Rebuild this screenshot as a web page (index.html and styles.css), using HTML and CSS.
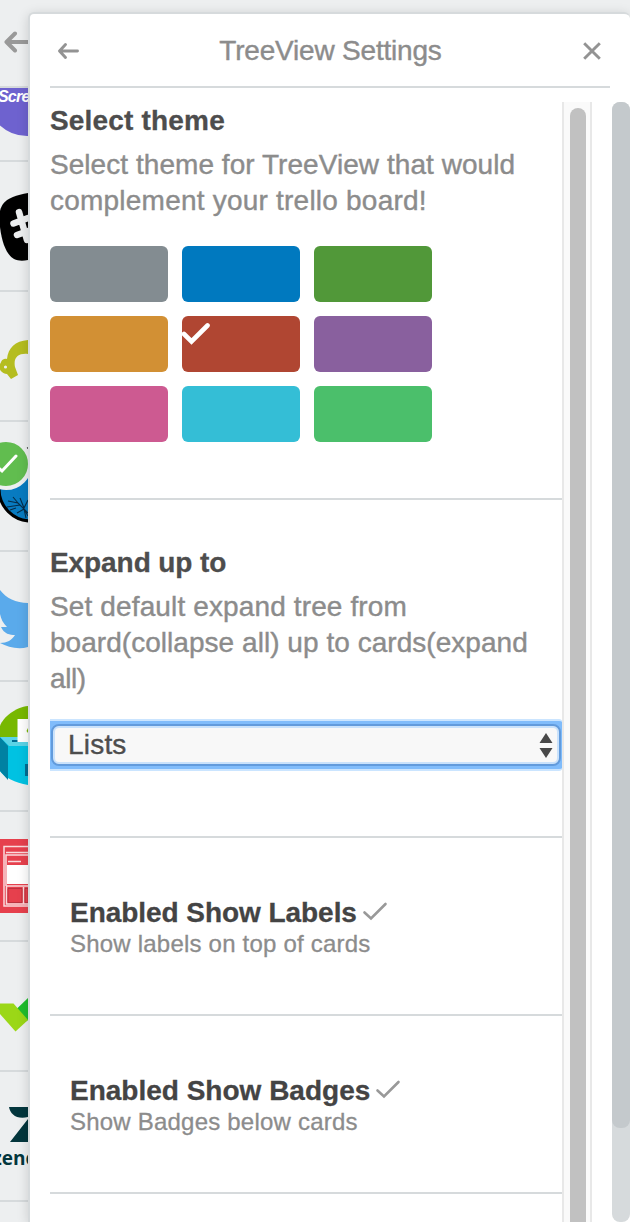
FILE: index.html
```html
<!DOCTYPE html>
<html lang="en">
<head>
<meta charset="utf-8">
<title>TreeView Settings</title>
<link rel="stylesheet" href="styles.css">
</head>
<body>
<div class="app">
  <aside class="rail">
    <header class="rail-head">
      <svg width="28" height="86" viewBox="0 0 28 86"><path d="M28 42H6.500M15 33.500L6.500 42L15 50.500" fill="none" stroke="#999" stroke-width="4" stroke-linecap="round" stroke-linejoin="round"/></svg>
    </header>
    <div class="rail-item rail-first">
      <svg viewBox="0 0 28 128"><circle cx="27" cy="64" r="40" fill="#6e62cf"/><text x="-2" y="70" class="script-word">Scre</text></svg>
    </div>
    <div class="rail-item">
      <svg viewBox="0 0 28 128"><path d="M28 31C17 33 7 36 3 42C-1 48 -1 53 0 65C2 82 7 93 14 97C18 99 23 99 28 98Z" fill="#000"/><path d="M19 50L27 78M28 56L13.500 61.500M28 69L17 73" fill="none" stroke="#edeff0" stroke-width="6.500" stroke-linecap="round"/></svg>
    </div>
    <div class="rail-item">
      <svg viewBox="0 0 28 128"><path d="M28 48C15 49 8 56 7 67C-1 64 -3 82 7 82L11 87L18 83L15 75C13 65 19 61 28 62Z" fill="#b5bd20"/><circle cx="5.500" cy="75" r="3.800" fill="#edeff0" stroke="#b5bd20" stroke-width="4.500"/></svg>
    </div>
    <div class="rail-item">
      <svg viewBox="0 0 28 128"><circle cx="31" cy="67" r="32" fill="#087bc1" stroke="#000" stroke-width="3"/><path d="M28 25L26.500 26L28 27Z" fill="#222"/><path d="M8 79L18 81L28 91M13 75L18 81M7 85L20 83M17 91L24 87L28 94M20 76L24 86M28 78L24 86M10 88L16 86M26 96L24 87" fill="none" stroke="#062d49" stroke-width="1.100"/><circle cx="6" cy="42" r="24" fill="#61bd4f" stroke="#edeff0" stroke-width="4"/><path d="M-5 43L2 49L16 34" fill="none" stroke="#fff" stroke-width="3" stroke-linecap="round"/></svg>
    </div>
    <div class="rail-item">
      <svg viewBox="0 0 28 128"><path d="M0 38C6 46 16 51 28 51V95C18 98 8 95 0 91C7 91 12 88 15 83C10 83 4 82 1 75H7C3 71 1 67 0 62Z" fill="#5aaaeb"/></svg>
    </div>
    <div class="rail-item">
      <svg viewBox="0 0 28 128"><path d="M28 24C16 25 3 35 0 44V55H28Z" fill="#77b800"/><path d="M0 55H28V103C15 101 4 95 0 89Z" fill="#00c2e2"/><path d="M0 55L8 64V98L0 89Z" fill="#0081a2"/><path d="M0 55H28V64H9Z" fill="#5bd3e6"/><path d="M12 58H18V60H12Z" fill="#006c92"/><path d="M17.500 37H28V60H17.500Z" fill="#fff"/><path d="M28 46L26.500 49L28 51Z" fill="#77b800"/><path d="M25 82H28V94H25Z" fill="#006c92"/></svg>
    </div>
    <div class="rail-item">
      <svg viewBox="0 0 28 128"><path d="M0 27H28V101H0Z" fill="#e6404d"/><path d="M28 34.500H4V94H28M28 40.500H6M28 43H6V74M28 92H6.500V74H28M23.500 75V92M8 49.500H21" fill="none" stroke="#fadadd" stroke-width="1.500"/><path d="M7 53H28V72H7Z" fill="#fff"/><path d="M8 76.500H22V90.500H8ZM25 76.500H28V90.500H25Z" fill="#e6404d" stroke="#a92d3a" stroke-width=".7"/></svg>
    </div>
    <div class="rail-item">
      <svg viewBox="0 0 28 128"><path d="M16 67.500L28 56V78L22 82Z" fill="#1fbd2d"/><path d="M0 61.500H13.500L28 78L15.500 89.500L0 72Z" fill="#9bd717"/></svg>
    </div>
    <div class="rail-item">
      <svg viewBox="0 0 28 128"><path d="M9 35H28V45C17 48 10 42 9 35ZM28 47V70H10Z" fill="#03363d"/><text x="-7.500" y="93" class="brand-word">zend</text></svg>
    </div>
    <div class="rail-item"></div>
  </aside>

  <section class="panel">
    <header class="panel-head">
      <svg class="back" width="22" height="20" viewBox="0 0 22 20"><path d="M20.500 10H3M8.500 3.500L2.500 10L8.500 16.500" fill="none" stroke="#939393" stroke-width="2.900" stroke-linecap="round" stroke-linejoin="round"/></svg>
      <h1 class="title">TreeView Settings</h1>
      <svg class="close" width="20" height="20" viewBox="0 0 20 20"><path d="M2.200 2.200L17.800 17.800M17.800 2.200L2.200 17.800" fill="none" stroke="#939393" stroke-width="2.900"/></svg>
    </header>
    <div class="panel-body">
      <main class="settings">
        <section class="group theme-group">
          <h2 class="heading h-theme">Select theme</h2>
          <p class="text"><span class="t1">Select theme for TreeView that would</span><br><span class="t2">complement your trello board!</span></p>
          <div class="swatches">
            <div class="swatch grey"></div><div class="swatch blue"></div><div class="swatch green"></div>
            <div class="swatch orange"></div>
            <div class="swatch red"><svg width="30" height="30" viewBox="0 0 30 30"><path d="M2 18L9.500 25.500L25.500 9.500" fill="none" stroke="#fff" stroke-width="4.600" stroke-linecap="round" stroke-linejoin="miter"/></svg></div>
            <div class="swatch purple"></div>
            <div class="swatch pink"></div><div class="swatch sky"></div><div class="swatch lime"></div>
          </div>
        </section>
        <section class="group expand-group">
          <h2 class="heading h-expand">Expand up to</h2>
          <p class="text"><span class="t3">Set default expand tree from</span><br><span class="t4">board(collapse all) up to cards(expand</span><br><span class="t5">all)</span></p>
          <div class="focus-ring">
            <div class="select" tabindex="0">
              <span class="select-value">Lists</span>
              <svg width="14" height="28" viewBox="0 0 14 28"><path d="M.5 12L7 2L13.500 12ZM.5 17H13.500L7 27Z" fill="#484848"/></svg>
            </div>
          </div>
        </section>
        <section class="group toggle">
          <div class="toggle-line"><h2 class="heading h-labels">Enabled Show Labels</h2><svg class="tick" width="26" height="22" viewBox="0 0 26 22"><path d="M2.500 11.500L9 17.500L23.500 3" fill="none" stroke="#999" stroke-width="2.600" stroke-linecap="round"/></svg></div>
          <p class="hint">Show labels on top of cards</p>
        </section>
        <section class="group toggle">
          <div class="toggle-line"><h2 class="heading">Enabled Show Badges</h2><svg class="tick" width="26" height="22" viewBox="0 0 26 22"><path d="M2.500 11.500L9 17.500L23.500 3" fill="none" stroke="#999" stroke-width="2.600" stroke-linecap="round"/></svg></div>
          <p class="hint">Show Badges below cards</p>
        </section>
      </main>
      <div class="inner-track"><div class="inner-thumb"></div></div>
      <div class="outer-track"><div class="outer-thumb"></div></div>
    </div>
  </section>
</div>
</body>
</html>
```

FILE: styles.css
```css
* { box-sizing: border-box; }
body { margin: 0; font-family: "Liberation Sans", Arial, sans-serif; background: #edeff0; }
h1, h2, p { margin: 0; }
svg { display: block; flex: none; }

.app { display: flex; width: 630px; height: 1222px; overflow: hidden; }

.rail { width: 28px; flex: none; overflow: hidden; }
.rail-head { height: 88px; border-bottom: 2px solid #d6dadc; }
.rail-item { height: 130px; border-bottom: 2px solid #d6dadc; }
.rail-item svg { width: 28px; height: 128px; }
.rail-first { display: flex; align-items: flex-end; height: 74px; overflow: hidden; }
.script-word { font: italic bold 16px "Liberation Sans", sans-serif; letter-spacing: -.8px; fill: #fff; }
.brand-word { font: bold 19px "Open Sans", sans-serif; fill: #03363d; }

.panel {
  flex: 1;
  min-width: 0;
  margin-top: 12px;
  display: flex;
  flex-direction: column;
  background: #fff;
  border: 2px solid #d6dadc;
  border-right: 0;
  border-bottom: 0;
  border-radius: 6px 6px 0 0;
  box-shadow: 0 2px 12px rgba(0, 0, 0, .15);
}
.panel-head {
  flex: none;
  display: flex;
  align-items: center;
  justify-content: space-between;
  height: 74px;
  margin: 0 20px;
  padding: 2px 8px 0 7px;
  border-bottom: 2px solid #d6dadc;
}
.title { font-size: 28px; line-height: 36px; font-weight: 400; color: #8c8c8c; letter-spacing: -.2px; -webkit-text-stroke: .4px; }

.panel-body { flex: 1; min-height: 0; display: flex; padding: 14px 0 0 20px; }
.settings { width: 512px; overflow: hidden; }
.group { border-bottom: 2px solid #d6dadc; }
.theme-group { padding-bottom: 56px; }
.heading { padding-top: 1px; font-size: 28px; line-height: 36px; font-weight: 700; color: #4d4d4d; white-space: nowrap; -webkit-text-stroke: .3px; }
.text { margin-top: 8px; font-size: 28px; line-height: 36px; color: #8c8c8c; white-space: nowrap; -webkit-text-stroke: .4px; }
.h-theme { letter-spacing: .18px; }
.h-expand { letter-spacing: -.08px; }
.h-labels { letter-spacing: -.05px; }
.t1 { letter-spacing: .05px; }
.t2 { letter-spacing: .22px; }
.t3 { letter-spacing: .13px; }
.t4 { letter-spacing: .04px; }
.t5 { letter-spacing: -.4px; }

.swatches { display: grid; grid-template-columns: repeat(3, 118px); grid-auto-rows: 56px; gap: 14px; margin-top: 27px; }
.swatch { border-radius: 6px; overflow: hidden; }
.grey { background: #838c91; }
.blue { background: #0079bf; }
.green { background: #519839; }
.orange { background: #d29034; }
.red { background: #b04632; }
.purple { background: #89609e; }
.pink { background: #cd5a91; }
.sky { background: #34bed6; }
.lime { background: #4bbf6b; }

.expand-group { padding: 44px 0 65px; }
.focus-ring {
  height: 52px;
  margin-top: 22px;
  padding: 3px 1px;
  background: #80bcfb;
  border: solid #cbe5ff;
  border-width: 2px 0;
  border-radius: 0 3px 3px 0;
}
.select {
  display: flex;
  align-items: center;
  justify-content: space-between;
  height: 42px;
  padding: 0 6px 0 15px;
  background: #f8f8f8;
  border: 2px solid #629bdc;
  border-radius: 8px;
  box-shadow: inset 0 0 0 2px #cae2fb;
}
.select-value { font-size: 28px; line-height: 36px; color: #4d4d4d; letter-spacing: .2px; -webkit-text-stroke: .4px; }

.toggle { padding: 56px 0 56px 20px; }
.toggle .heading { color: #444; }
.toggle-line { display: flex; align-items: center; gap: 5px; height: 36px; }
.hint { font-size: 24px; line-height: 28px; color: #8c8c8c; white-space: nowrap; letter-spacing: .21px; -webkit-text-stroke: .3px; }

.inner-track { width: 30px; padding: 6px 5px 0 6px; background: #fafafa; border: solid #e8e8e8; border-width: 0 2px; overflow: hidden; }
.inner-thumb { width: 16px; height: 1130px; border-radius: 8px; background: #c1c1c1; }
.outer-track { width: 18px; height: 1120px; margin-left: 20px; border-radius: 8px; background: #d6dadc; }
.outer-thumb { height: 1026px; border-radius: 8px; background: #c4c9cc; }
```
